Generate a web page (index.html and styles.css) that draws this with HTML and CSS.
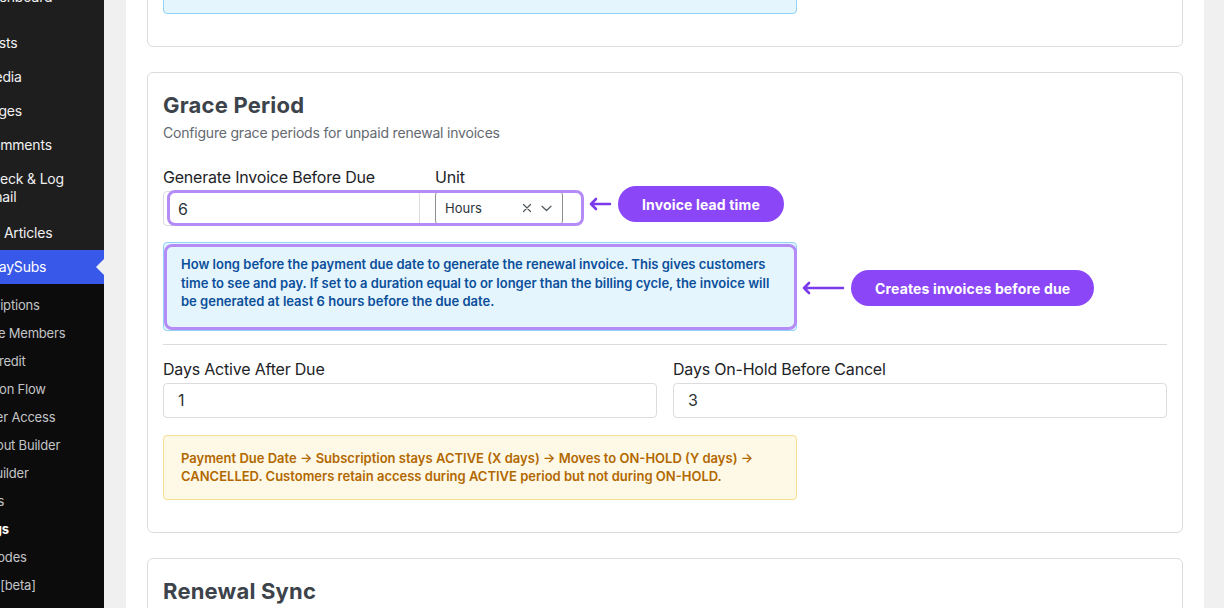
FILE: index.html
```html
<!DOCTYPE html>
<html lang="en">

<head>
	<meta charset="UTF-8">
	<meta name="viewport" content="width=device-width, initial-scale=1.0">
	<title>PaySubs Settings</title>
	<link rel="stylesheet" href="styles.css">
</head>

<body>
	<div class="admin">
		<nav class="sidebar">
			<ul class="menu">
				<li class="menu-item">Dashboard</li>
				<li class="menu-sep"></li>
				<li class="menu-item">Posts</li>
				<li class="menu-item">Media</li>
				<li class="menu-item">Pages</li>
				<li class="menu-item">Comments</li>
				<li class="menu-item tall">Check &amp; Log<br>Email</li>
				<li class="menu-item">KB Articles</li>
				<li class="menu-item active">PaySubs</li>
			</ul>
			<ul class="submenu">
				<li>Subscriptions</li>
				<li>Lifetime Members</li>
				<li>User Credit</li>
				<li>Migration Flow</li>
				<li>Member Access</li>
				<li>Checkout Builder</li>
				<li>Plan Builder</li>
				<li>Reports</li>
				<li class="current">Settings</li>
				<li>Shortcodes</li>
				<li>Import [beta]</li>
			</ul>
		</nav>

		<main class="content">
			<div class="panel">
				<section class="card card-first">
					<div class="notice notice-info">
						<p>Renewal reminders are sent to customers by email before each invoice is generated, using the
							templates from the Email Builder. Reminder timing follows the billing cycle of the plan.</p>
					</div>
				</section>

				<section class="card">
					<h2 class="card-title">Grace Period</h2>
					<p class="card-desc">Configure grace periods for unpaid renewal invoices</p>

					<div class="field-row">
						<div class="field field-lead">
							<label for="lead">Generate Invoice Before Due</label>
							<input class="input" type="text" id="lead" value="6">
						</div>
						<div class="field">
							<label>Unit</label>
							<div class="select">
								<span class="select-value">Hours</span>
								<svg class="select-icon" width="10" height="10" viewBox="0 0 10 10">
									<path d="M1.5 1.5l7 7M8.5 1.5l-7 7" stroke="#50575e" stroke-width="1.2" fill="none" stroke-linecap="round" />
								</svg>
								<svg class="select-icon" width="11" height="7" viewBox="0 0 11 7">
									<path d="M1 1.2l4.5 4.3 4.5-4.3" stroke="#50575e" stroke-width="1.2" fill="none" stroke-linecap="round" stroke-linejoin="round" />
								</svg>
							</div>
						</div>
					</div>

					<div class="notice notice-info notice-help">
						<p>How long before the payment due date to generate the renewal invoice. This gives customers
							time to see and pay. If set to a duration equal to or longer than the billing cycle, the
							invoice will be generated at least 6 hours before the due date.</p>
					</div>

					<div class="divider"></div>

					<div class="field-row field-row-split">
						<div class="field">
							<label for="active-days">Days Active After Due</label>
							<input class="input" type="text" id="active-days" value="1">
						</div>
						<div class="field">
							<label for="hold-days">Days On-Hold Before Cancel</label>
							<input class="input" type="text" id="hold-days" value="3">
						</div>
					</div>

					<div class="notice notice-warning">
						<p>Payment Due Date → Subscription stays ACTIVE (X days) → Moves to ON-HOLD (Y days) →
							CANCELLED. Customers retain access during ACTIVE period but not during ON-HOLD.</p>
					</div>

					<!-- annotations -->
					<div class="hl hl-unit"></div>
					<div class="hl hl-help"></div>
					<div class="callout callout-unit">
						<svg width="24" height="14" viewBox="0 0 24 14">
							<path d="M22 7H3M8 2L3 7l5 5" stroke="#7c3aed" stroke-width="2.6" fill="none" stroke-linecap="round" stroke-linejoin="round" />
						</svg>
						<span class="pill">Invoice lead time</span>
					</div>
					<div class="callout callout-help">
						<svg width="44" height="14" viewBox="0 0 44 14">
							<path d="M42 7H3M8 2L3 7l5 5" stroke="#7c3aed" stroke-width="2.6" fill="none" stroke-linecap="round" stroke-linejoin="round" />
						</svg>
						<span class="pill">Creates invoices before due</span>
					</div>
				</section>

				<section class="card">
					<h2 class="card-title">Renewal Sync</h2>
					<p class="card-desc">Align renewal dates for customers with multiple subscriptions</p>
				</section>
			</div>
		</main>
	</div>
</body>

</html>
```

FILE: styles.css
```css
body {
	margin: 0;
	font-family: Inter, "Noto Sans", sans-serif;
	background-color: #f0f0f0;
}

.admin {
	display: flex;
	height: 608px;
	overflow: hidden;
}

/* sidebar, scrolled sideways so only the right part shows */
.sidebar {
	width: 104px;
	flex: none;
	background-color: #1e1e1e;
	overflow: hidden;
}

.menu,
.submenu {
	list-style: none;
	padding: 0;
	width: 158px;
}

.menu {
	margin: -20px 0 0 -54px;
}

.menu-item {
	position: relative;
	padding: 8px 8px 8px 36px;
	font-size: 14px;
	line-height: 18px;
	letter-spacing: -0.2px;
	color: #f0f0f1;
	white-space: nowrap;
}

.menu-item.tall {
	padding-bottom: 10px;
}

.menu-sep {
	height: 12px;
}

.menu-item.active {
	padding-left: 44px;
	background-color: #3858e9;
	color: #fff;
}

.menu-item.active::after {
	content: "";
	position: absolute;
	right: 0;
	top: 50%;
	margin-top: -8px;
	border: 8px solid transparent;
	border-right-color: #f0f0f0;
	border-left: none;
}

.submenu {
	margin: 0 0 0 -54px;
	padding: 7px 0 8px;
	background-color: #0c0c0c;
	min-height: 400px;
}

.submenu li {
	padding: 5px 12px;
	font-size: 13px;
	line-height: 18px;
	letter-spacing: -0.2px;
	color: #c3c4c7;
	white-space: nowrap;
}

.submenu li.current {
	color: #fff;
	font-weight: 700;
}

/* main area */
.content {
	flex: 1;
	padding: 0 20px 0 22px;
}

.panel {
	height: 100%;
	background-color: #fff;
	padding: 0 21px;
	overflow: hidden;
}

.card {
	position: relative;
	border: 1px solid #dcdcde;
	border-radius: 6px;
	padding: 16px 15px 32px;
	margin-bottom: 25px;
}

.card-first {
	margin-top: -73px;
}

.card-title {
	margin: 0;
	font-size: 22px;
	line-height: 32px;
	font-weight: 700;
	letter-spacing: 0.2px;
	color: #3c434a;
}

.card-desc {
	margin: 2px 0 0;
	font-size: 14px;
	line-height: 20px;
	letter-spacing: -0.2px;
	color: #646970;
}

.field-row {
	display: flex;
	gap: 15px;
	margin-top: 23px;
}

.field-lead {
	width: 257px;
}

.field-row-split {
	gap: 16px;
	margin-top: 13px;
}

.field-row-split .field {
	flex: 1;
}

.field label {
	display: block;
	font-size: 16px;
	line-height: 22px;
	letter-spacing: -0.2px;
	color: #1d2327;
	margin-bottom: 3px;
}

.input {
	display: block;
	width: 100%;
	height: 35px;
	box-sizing: border-box;
	border: 1px solid #dcdcde;
	border-radius: 4px;
	padding: 0 14px;
	font-family: inherit;
	font-size: 16px;
	color: #2c3338;
	background-color: #fff;
}

.select {
	display: flex;
	align-items: center;
	width: 128px;
	height: 34px;
	box-sizing: border-box;
	border: 1px solid #8c8f94;
	border-radius: 4px;
	padding: 0 10px 0 9px;
	font-size: 13px;
	color: #2c3338;
}

.select-value {
	flex: 1;
}

.select-icon {
	margin-left: 9px;
}

/* notices */
.notice {
	max-width: 634px;
	box-sizing: border-box;
	border: 1px solid;
	border-radius: 4px;
	font-size: 13px;
	font-weight: 600;
}

.notice p {
	margin: 0;
}

.notice-info {
	background-color: #e5f5fd;
	border-color: #8fd3f7;
	color: #0b4f9b;
	padding: 12px 17px 19px;
	line-height: 18.5px;
}

.notice-help {
	margin-top: 16px;
}

.notice-warning {
	margin-top: 17px;
	background-color: #fef9e7;
	border-color: #f6df8c;
	color: #b26800;
	padding: 13px 17px 14px;
	line-height: 18px;
}

.divider {
	border-top: 1px solid #dcdcde;
	margin-top: 13px;
}

/* annotation overlays */
.hl {
	position: absolute;
	box-sizing: border-box;
	border: 3px solid #b58cf7;
	border-radius: 8px;
}

.hl-unit {
	left: 19px;
	top: 117px;
	width: 417px;
	height: 36px;
}

.hl-help {
	left: 16px;
	top: 171px;
	width: 633px;
	height: 86px;
}

.callout {
	position: absolute;
	display: flex;
	align-items: center;
	gap: 6px;
}

.callout-unit {
	left: 440px;
	top: 113px;
}

.callout-help {
	left: 653px;
	top: 197px;
}

.pill {
	display: flex;
	align-items: center;
	height: 36px;
	padding: 0 24px;
	border-radius: 18px;
	background-color: #8b46f8;
	color: #fff;
	font-size: 14px;
	font-weight: 700;
	letter-spacing: 0.15px;
	white-space: nowrap;
}
```
